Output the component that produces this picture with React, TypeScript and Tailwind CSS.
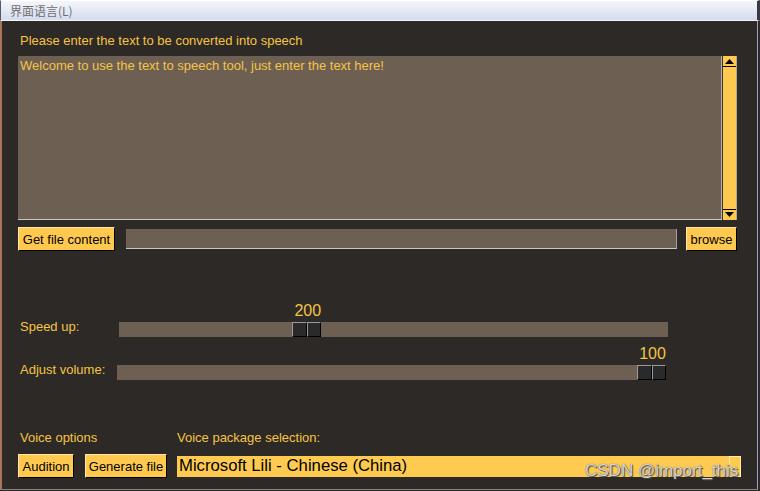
import React from "react";

const Btn = ({ label, w }: { label: string; w: string }) => (
  <button
    className={`${w} h-[24px] bg-[#ffc94f] text-black text-[13px] leading-none border border-t-[#ffe9a8] border-l-[#ffe9a8] border-r-black border-b-black flex items-center justify-center shrink-0`}
  >
    {label}
  </button>
);

const Thumb = () => (
  <div className="w-[29px] h-[15px] flex">
    <div className="flex-1 bg-[#2a2a2a] border-t border-l border-t-[#9a9a9a] border-l-[#9a9a9a] border-r border-b border-r-black border-b-black" />
    <div className="flex-1 bg-[#2a2a2a] border-t border-l border-t-[#9a9a9a] border-l-[#9a9a9a] border-r border-b border-r-black border-b-black" />
  </div>
);

const Slider = ({
  label,
  value,
  max,
  labelW,
}: {
  label: string;
  value: number;
  max: number;
  labelW: string;
}) => {
  const pos = (value / max) * (549 - 29);
  return (
    <div className="flex items-end">
      <div className={`${labelW} h-[15px] flex items-center shrink-0 text-[13px] text-[#f5c445] leading-[15px] pl-[2px] translate-y-[-3px]`}>
        {label}
      </div>
      <div className="flex flex-col w-[549px]">
        <div className="h-[18px] relative">
          <div
            className="absolute top-0 w-[29px] text-center text-[16px] leading-[18px] text-[#f5c445]"
            style={{ left: pos + 1 }}
          >
            {value}
          </div>
        </div>
        <div className="mt-[2px] h-[15px] bg-[#6e5f53] relative">
          <div className="absolute top-0" style={{ left: pos }}>
            <Thumb />
          </div>
        </div>
      </div>
    </div>
  );
};

export default function App() {
  return (
    <div className="w-[760px] h-[491px] bg-[#2d2926] flex flex-col relative overflow-hidden font-['Liberation_Sans',Arial,sans-serif]">
      {/* menu bar */}
      <div className="h-[21px] shrink-0 bg-gradient-to-b from-[#f4f6fb] to-[#d5dcef] border-t border-t-white border-b border-b-[#f6f6f6] border-l border-l-[#5a5a5a] border-r-[3px] border-r-[#3a3a44] flex items-center pl-[9px]">
        <span className="text-[12px] text-[#707070] font-['Noto_Sans_CJK_SC','Liberation_Sans',sans-serif] leading-none">
          界面语言(L)
        </span>
      </div>
      {/* content */}
      <div className="flex-1 flex flex-col border-l-2 border-l-[#a8745a] border-r border-r-[#9c9cc4] border-b border-b-[#8c807c] mr-[2px] mb-[1px] pl-[16px]">
        <div className="mt-[12px] text-[13px] leading-[15px] text-[#f5c445] pl-[2px]">
          Please enter the text to be converted into speech
        </div>
        {/* textarea */}
        <div className="mt-[8px] h-[164px] w-[719px] flex">
          <div className="flex-1 bg-[#6e5f53] border-b border-b-[#c8c8c8] border-r border-r-[#b0b0b0] pl-[2px] pt-[2px] text-[13px] leading-[15px] text-[#f5c445]">
            Welcome to use the text to speech tool, just enter the text here!
          </div>
          <div className="w-[15px] flex flex-col bg-[#ffc94f] border-r border-r-[#b0a890] border-l border-l-[#3a3530]">
            <div className="h-[10px] mt-[1px] flex items-center justify-center border-b border-b-black">
              <svg width="9" height="5" viewBox="0 0 9 5">
                <path d="M4.5 0 L9 5 L0 5 Z" fill="black" />
              </svg>
            </div>
            <div className="flex-1" />
            <div className="h-[10px] mb-[1px] flex items-center justify-center border-t border-t-black">
              <svg width="9" height="5" viewBox="0 0 9 5">
                <path d="M0 0 L9 0 L4.5 5 Z" fill="black" />
              </svg>
            </div>
          </div>
        </div>
        {/* file row */}
        <div className="mt-[7px] flex items-center w-[719px]">
          <Btn label="Get file content" w="w-[97px]" />
          <div className="ml-[11px] w-[551px] h-[20px] bg-[#6e5f53] border-b border-b-[#c8c8c8] border-r border-r-[#a0a0a0]" />
          <div className="ml-[9px]">
            <Btn label="browse" w="w-[51px]" />
          </div>
        </div>
        {/* sliders */}
        <div className="mt-[51px]">
          <Slider label="Speed up:" value={200} max={600} labelW="w-[101px]" />
        </div>
        <div className="mt-[8px]">
          <Slider label="Adjust volume:" value={100} max={100} labelW="w-[99px]" />
        </div>
        {/* voice */}
        <div className="mt-[50px] flex text-[13px] leading-[15px] text-[#f5c445]">
          <div className="w-[159px] pl-[2px]">Voice options</div>
          <div>Voice package selection:</div>
        </div>
        <div className="mt-[9px] flex items-center">
          <Btn label="Audition" w="w-[56px]" />
          <div className="ml-[11px]">
            <Btn label="Generate file" w="w-[82px]" />
          </div>
          <div className="ml-[10px] w-[564px] h-[21px] bg-[#ffca50] flex items-center relative">
            <span className="pl-[2px] text-[16.7px] leading-none text-black">
              Microsoft Lili - Chinese (China)
            </span>
            <div className="absolute right-0 top-0 w-[12px] h-[21px] border border-[#fff0b0]" />
          </div>
        </div>
      </div>
      {/* watermark */}
      <div className="absolute left-[585px] top-[461px] text-[17px] leading-[20px] text-[#d4d4d4] [text-shadow:0_0_1px_#555,1px_1px_1px_#444]">
        CSDN @import_this
      </div>
    </div>
  );
}
